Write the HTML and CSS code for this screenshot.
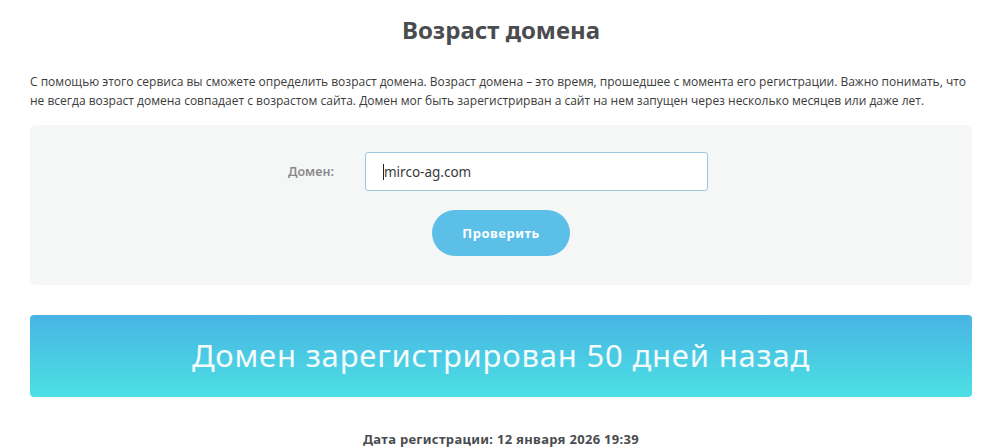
FILE: index.html
```html
<!DOCTYPE html>
<html lang="ru">
<head>
<meta charset="utf-8">
<link rel="stylesheet" href="styles.css">
</head>
<body>
<div class="page">
  <h1 class="title">Возраст домена</h1>
  <p class="intro">С помощью этого сервиса вы сможете определить возраст домена. Возраст домена – это время, прошедшее с момента его регистрации. Важно понимать, что не всегда возраст домена совпадает с возрастом сайта. Домен мог быть зарегистрирван а сайт на нем запущен через несколько месяцев или даже лет.</p>
  <div class="form-box">
    <div class="form-row">
      <label class="label">Домен:</label>
      <div class="input"><span class="caret"></span>mirco-ag.com</div>
    </div>
    <div class="btn-row">
      <div class="btn">Проверить</div>
    </div>
  </div>
  <div class="result">Домен зарегистрирован 50 дней назад</div>
  <div class="date">Дата регистрации: 12 января 2026 19:39</div>
</div>
</body>
</html>
```
FILE: styles.css
```css
html, body {
  margin: 0;
  padding: 0;
  background: #ffffff;
}
.page {
  padding: 0 28px 0 30px;
  font-family: "Open Sans", "Liberation Sans", sans-serif;
}
.title {
  margin: 0;
  padding-top: 15px;
  height: 30px;
  text-align: center;
  font-family: "Noto Sans", sans-serif;
  font-weight: 700;
  font-size: 24px;
  line-height: 30px;
  color: #4a4c4f;
}
.intro {
  margin: 27px 0 0 0;
  font-size: 12px;
  line-height: 19px;
  color: #3b3b3b;
}
.form-box {
  margin-top: 15px;
  background: #f5f7f7;
  border-radius: 6px;
  padding: 27px 0 29px 0;
}
.form-row {
  display: flex;
  align-items: center;
  justify-content: center;
  padding-right: 6px;
}
.label {
  font-family: "Noto Sans", sans-serif;
  font-weight: 600;
  font-size: 12.5px;
  color: #8a8a8a;
  width: 46px;
  margin-right: 31px;
}
.input {
  width: 324px;
  height: 37px;
  box-sizing: content-box;
  border: 1px solid #9cc8dc;
  border-radius: 3px;
  background: #ffffff;
  padding: 0 0 0 17px;
  display: flex;
  align-items: center;
  font-family: "Noto Sans", sans-serif;
  font-size: 13.5px;
  color: #3a3a3a;
}
.caret {
  display: inline-block;
  width: 1px;
  height: 16px;
  background: #222;
}
.btn-row {
  display: flex;
  justify-content: center;
  margin-top: 19px;
}
.btn {
  width: 138px;
  height: 46px;
  border-radius: 23px;
  background: #5bbfe8;
  color: #ffffff;
  font-family: "Noto Sans", sans-serif;
  font-weight: 700;
  font-size: 13px;
  letter-spacing: 0.5px;
  display: flex;
  align-items: center;
  justify-content: center;
}
.result {
  margin-top: 30px;
  height: 82px;
  border-radius: 4px;
  background: linear-gradient(180deg, #48b4e3 0%, #4ce0e4 100%);
  color: #f4fbfd;
  font-family: "Noto Sans", sans-serif;
  font-weight: 400;
  font-size: 31px;
  letter-spacing: 0.8px;
  display: flex;
  align-items: center;
  justify-content: center;
  padding-bottom: 2px;
  box-sizing: border-box;
}
.date {
  margin-top: 33px;
  text-align: center;
  font-family: "Noto Sans", sans-serif;
  font-weight: 700;
  font-size: 13px;
  letter-spacing: 0.3px;
  color: #4a4c4f;
  line-height: 18px;
}
```
